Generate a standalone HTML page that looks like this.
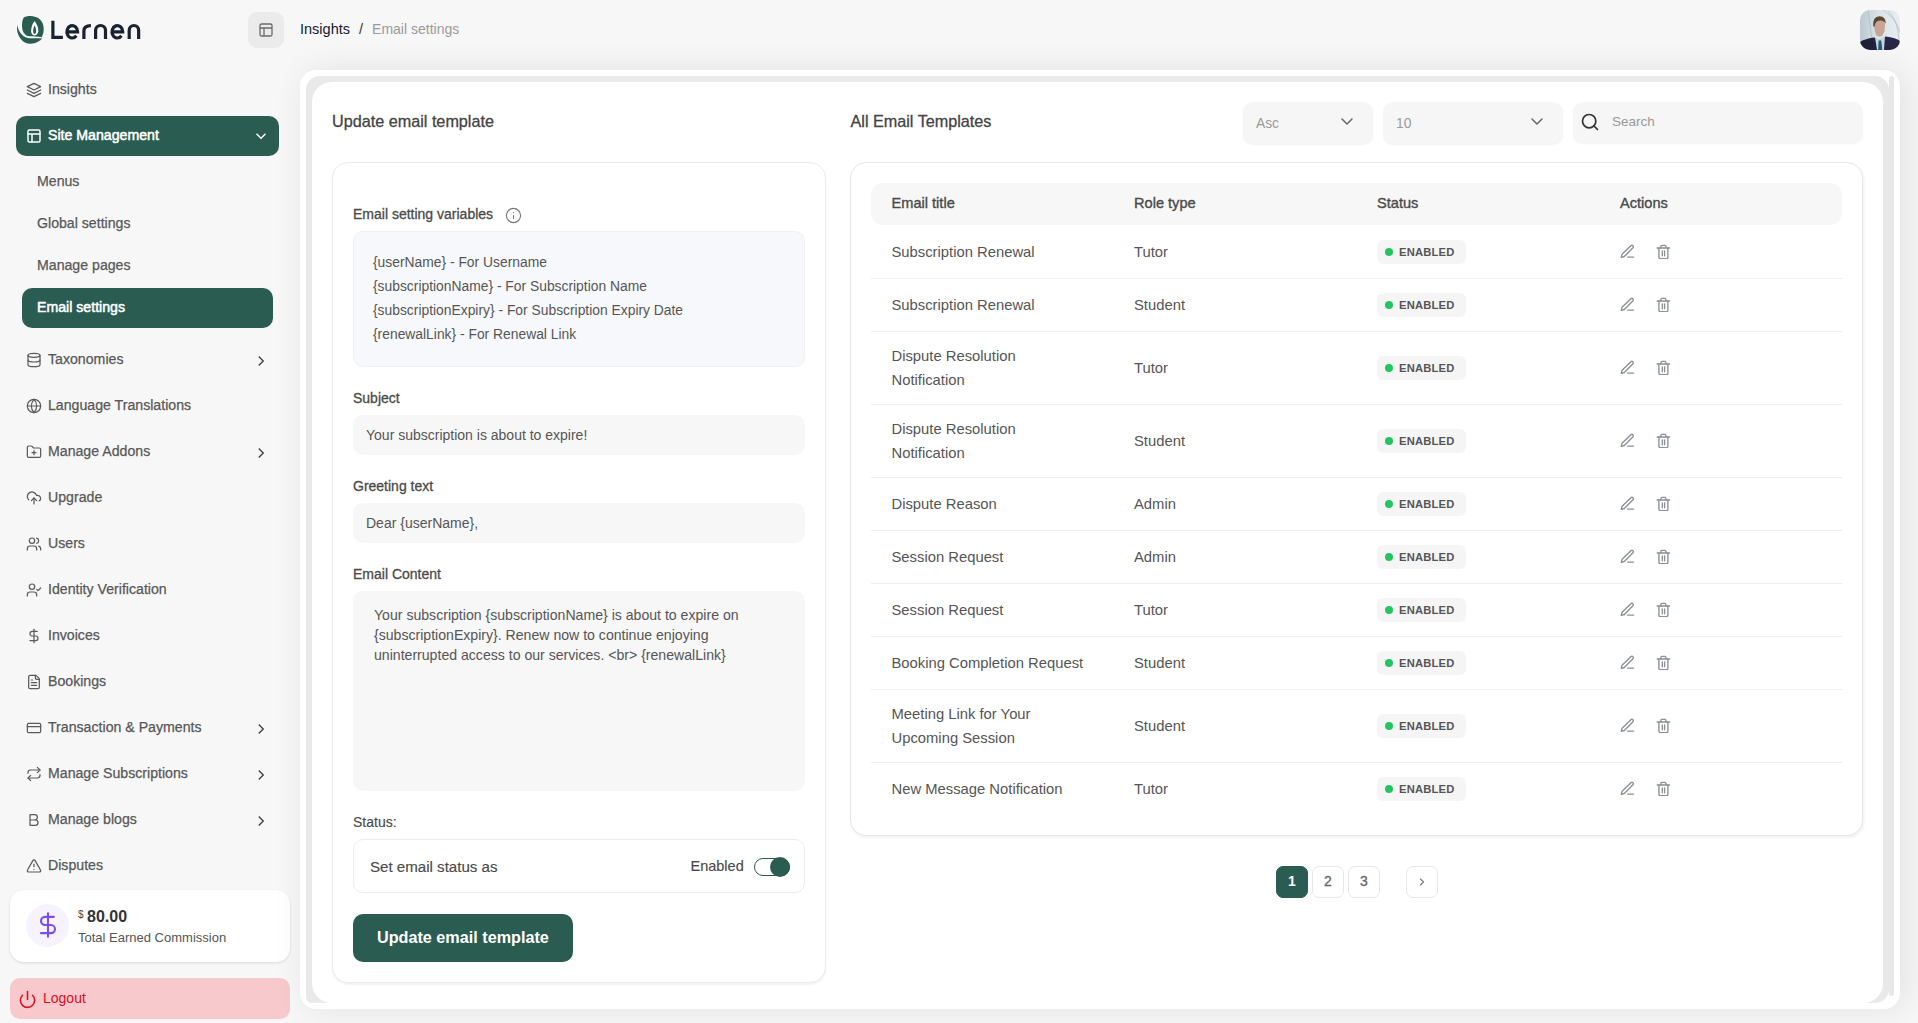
<!DOCTYPE html>
<html><head><meta charset="utf-8">
<style>
*{box-sizing:border-box;margin:0;padding:0}
html,body{width:1918px;height:1023px;overflow:hidden}
body{background:#f7f7f7;font-family:"Liberation Sans",sans-serif;color:#585858;position:relative}
.abs{position:absolute}
svg{display:block}
.nav{position:absolute;left:26px;height:24px;display:flex;align-items:center;font-size:14.15px;color:#585858;-webkit-text-stroke:0.25px #585858;white-space:nowrap}
.nav svg{width:16px;height:16px;margin-right:6px;position:relative;top:1px;stroke:#5a5a5a;fill:none;stroke-width:1.85;stroke-linecap:round;stroke-linejoin:round}
.chev{position:absolute;left:251.5px;width:18px;height:18px;stroke:#444;fill:none;stroke-width:1.9;stroke-linecap:butt;stroke-linejoin:miter}
.sub{position:absolute;left:37px;font-size:14.15px;color:#585858;-webkit-text-stroke:0.25px #585858;height:20px;line-height:20px;white-space:nowrap}
</style></head>
<body>
<!-- HEADER -->
<svg class="abs" style="left:0;top:0" width="150" height="60" viewBox="0 0 150 60">
<path d="M24 17.5 C27 15.5 36 15 40.5 20 C44.5 24.5 44.8 32 41.6 37.3 C37.5 36.4 33 36.6 29.5 36.3 C24.2 35.8 22 31 22 25.5 C22 21.5 22.8 18.5 24 17.5 Z" fill="#2a5c51"/>
<path d="M17.1 24.4 C15.8 35.5 22.5 44 31 43.8 C35.5 43.7 39.8 41.2 42.2 38.6 C38 38 34 38.2 30.5 38.3 C23.5 38.4 18.2 32 17.1 24.4 Z" fill="#2a5c51"/>
<path d="M34.5 21 C37 24 38.6 28 38.3 31.5 C37.9 34 36 35.5 34.6 35.5 C33 35.5 31.3 34 31.1 31.5 C31 28 32.2 24 34.5 21 Z" fill="#fbfbfb"/>
<path d="M34.6 25.5 C35.8 27.5 36.3 30 36.1 31.8 C35.9 33.2 35.2 33.9 34.6 33.9 C34 33.9 33.3 33.2 33.2 31.8 C33 30 33.5 27.5 34.6 25.5 Z" fill="#2a5c51"/>
<g fill="none" stroke="#1a2232" stroke-width="3.2" stroke-linecap="butt" stroke-linejoin="miter">
<path d="M52.9 20.8 V37.4 H62.9"/>
<path d="M66.9 31.8 H77.6 A5.35 6.2 0 1 0 76.35 35.8"/>
<path d="M83.9 38.9 V31 C83.9 27 86.5 25.7 90.9 25.7"/>
<path d="M95.6 38.9 V30.5 A4.95 5 0 0 1 105.5 30.5 V38.9"/>
<path d="M112 31.8 H122.7 A5.35 6.2 0 1 0 121.45 35.8"/>
<path d="M129.2 38.9 V30.5 A4.725 5 0 0 1 138.65 30.5 V38.9"/>
</g>
</svg>
<div class="abs" style="left:248px;top:12px;width:36px;height:36px;border-radius:9px;background:#ebebeb">
<svg class="abs" style="left:11px;top:11px" width="14" height="14" viewBox="0 0 14 14" fill="none" stroke="#6b6b6b" stroke-width="1.3"><rect x="1" y="1" width="12" height="12" rx="1.5"/><path d="M1 5h12M5 5v8"/></svg>
</div>
<div class="abs" style="left:300px;top:19px;font-size:14.5px;line-height:20px;color:#151a2d;white-space:nowrap">Insights <span style="color:#333;margin:0 5px">/</span> <span style="color:#9a9a9a;font-size:14px">Email settings</span></div>

<svg class="abs" style="left:1860px;top:10px" width="40" height="40" viewBox="0 0 40 40">
<defs><clipPath id="av"><rect width="40" height="40" rx="10"/></clipPath>
<linearGradient id="avbg" x1="0" y1="0" x2="1" y2="0"><stop offset="0" stop-color="#b9c9cf"/><stop offset="0.45" stop-color="#d9e4e8"/><stop offset="1" stop-color="#e6eef0"/></linearGradient>
<linearGradient id="suit" x1="0" y1="0" x2="1" y2="0"><stop offset="0" stop-color="#1d1d33"/><stop offset="0.7" stop-color="#27284a"/><stop offset="1" stop-color="#2a2440"/></linearGradient></defs>
<g clip-path="url(#av)">
<rect width="40" height="40" fill="url(#avbg)"/>
<path d="M23 0 Q36 8 40 22 M28 1 Q38 10 39 30 M8 0 L12 30" stroke="#aab8bf" stroke-width="0.9" fill="none" opacity="0.7"/>
<path d="M0 32 Q4 29 14 27.5 L19.5 30 L25.5 26.5 Q36 27.5 40 31 L40 40 L0 40 Z" fill="url(#suit)"/>
<path d="M15 27.5 L19.5 29.5 L25 26.5 L24 40 L17 40 Z" fill="#c3d6e2"/>
<path d="M18.6 30.5 L21.3 30.5 L22.3 40 L18.2 40 Z" fill="#2c5877"/>
<path d="M14 15 Q14 9 19.5 9 Q25 9 25 15 L24.5 21 Q23 26.5 19.5 26.5 Q16 26.5 14.8 21 Z" fill="#c8a495"/>
<path d="M13.2 16 Q12.5 6.5 19.5 6.2 Q26 6.3 25.6 14 Q24.5 10.2 20 10.5 Q15 10.5 14.5 17 Z" fill="#5e4536"/>
</g></svg>
<!-- SIDEBAR -->
<div class="nav" style="top:77px">
<svg viewBox="0 0 24 24"><path d="M12 2 2 7l10 5 10-5-10-5z"/><path d="m2 17 10 5 10-5"/><path d="m2 12 10 5 10-5"/></svg>Insights</div>

<div class="abs" style="left:16px;top:116px;width:263px;height:40px;border-radius:10px;background:#2a5c51"></div>
<div class="nav" style="top:123px;color:#fff;-webkit-text-stroke:0.5px #fff">
<svg viewBox="0 0 24 24" style="stroke:#fff;stroke-width:2.2"><rect x="3" y="3" width="18" height="18" rx="2"/><path d="M3 9h18M9 21V9"/></svg>Site Management</div>
<svg class="chev" style="top:127.0px;stroke:#fff" viewBox="0 0 24 24"><path d="m6 9 6 6 6-6"/></svg>

<div class="sub" style="top:171px">Menus</div>
<div class="sub" style="top:213px">Global settings</div>
<div class="sub" style="top:255px">Manage pages</div>
<div class="abs" style="left:22px;top:288px;width:251px;height:40px;border-radius:10px;background:#2a5c51"></div>
<div class="sub" style="top:297px;color:#fff;-webkit-text-stroke:0.5px #fff">Email settings</div>

<div class="nav" style="top:347px"><svg viewBox="0 0 24 24"><ellipse cx="12" cy="5" rx="9" ry="3"/><path d="M3 5v14a9 3 0 0 0 18 0V5"/><path d="M3 12a9 3 0 0 0 18 0"/></svg>Taxonomies</div>
<svg class="chev" style="top:351.5px" viewBox="0 0 24 24"><path d="m9 18 6-6-6-6"/></svg>
<div class="nav" style="top:393px"><svg viewBox="0 0 24 24"><circle cx="12" cy="12" r="10"/><path d="M12 2a14.5 14.5 0 0 0 0 20 14.5 14.5 0 0 0 0-20"/><path d="M2 12h20"/></svg>Language Translations</div>
<div class="nav" style="top:439px"><svg viewBox="0 0 24 24"><path d="M12 10v6M9 13h6"/><path d="M20 20a2 2 0 0 0 2-2V8a2 2 0 0 0-2-2h-7.9a2 2 0 0 1-1.69-.9L9.6 3.9A2 2 0 0 0 7.93 3H4a2 2 0 0 0-2 2v13a2 2 0 0 0 2 2Z"/></svg>Manage Addons</div>
<svg class="chev" style="top:443.5px" viewBox="0 0 24 24"><path d="m9 18 6-6-6-6"/></svg>
<div class="nav" style="top:485px"><svg viewBox="0 0 24 24"><path d="M4 14.9A7 7 0 1 1 15.7 8h1.8a4.5 4.5 0 0 1 2.5 8.2"/><path d="M12 12v9"/><path d="m16 16-4-4-4 4"/></svg>Upgrade</div>
<div class="nav" style="top:531px"><svg viewBox="0 0 24 24"><path d="M16 21v-2a4 4 0 0 0-4-4H6a4 4 0 0 0-4 4v2"/><circle cx="9" cy="7" r="4"/><path d="M22 21v-2a4 4 0 0 0-3-3.87M16 3.13a4 4 0 0 1 0 7.75"/></svg>Users</div>
<div class="nav" style="top:577px"><svg viewBox="0 0 24 24"><path d="M16 21v-2a4 4 0 0 0-4-4H6a4 4 0 0 0-4 4v2"/><circle cx="9" cy="7" r="4"/><path d="M16 11l2 2 4-4"/></svg>Identity Verification</div>
<div class="nav" style="top:623px"><svg viewBox="0 0 24 24"><path d="M12 2v20"/><path d="M17 5H9.5a3.5 3.5 0 0 0 0 7h5a3.5 3.5 0 0 1 0 7H6"/></svg>Invoices</div>
<div class="nav" style="top:669px"><svg viewBox="0 0 24 24"><path d="M15 2H6a2 2 0 0 0-2 2v16a2 2 0 0 0 2 2h12a2 2 0 0 0 2-2V7Z"/><path d="M14 2v4a2 2 0 0 0 2 2h4M10 9H8M16 13H8M16 17H8"/></svg>Bookings</div>
<div class="nav" style="top:715px"><svg viewBox="0 0 24 24"><rect x="2" y="5" width="20" height="14" rx="2"/><path d="M2 10h20"/></svg>Transaction &amp; Payments</div>
<svg class="chev" style="top:719.5px" viewBox="0 0 24 24"><path d="m9 18 6-6-6-6"/></svg>
<div class="nav" style="top:761px"><svg viewBox="0 0 24 24"><path d="m17 2 4 4-4 4"/><path d="M3 11v-1a4 4 0 0 1 4-4h14"/><path d="m7 22-4-4 4-4"/><path d="M21 13v1a4 4 0 0 1-4 4H3"/></svg>Manage Subscriptions</div>
<svg class="chev" style="top:765.5px" viewBox="0 0 24 24"><path d="m9 18 6-6-6-6"/></svg>
<div class="nav" style="top:807px"><svg viewBox="0 0 24 24"><path d="M6 4h7a4 4 0 0 1 0 8H6zM6 12h8a4 4 0 0 1 0 8H6z"/></svg>Manage blogs</div>
<svg class="chev" style="top:811.5px" viewBox="0 0 24 24"><path d="m9 18 6-6-6-6"/></svg>
<div class="nav" style="top:853px"><svg viewBox="0 0 24 24"><path d="m21.73 18-8-14a2 2 0 0 0-3.48 0l-8 14A2 2 0 0 0 4 21h16a2 2 0 0 0 1.73-3"/><path d="M12 9v4M12 17h.01"/></svg>Disputes</div>

<div class="abs" style="left:10px;top:890px;width:280px;height:72px;border-radius:14px;background:#fff;box-shadow:0 1px 3px rgba(0,0,0,0.12)">
<div class="abs" style="left:16px;top:14px;width:43px;height:43px;border-radius:50%;background:#f6f3ff">
<svg class="abs" style="left:8px;top:7px" width="28" height="28" viewBox="0 0 24 24" fill="none" stroke="#7c4df0" stroke-width="1.8" stroke-linecap="round"><path d="M12 2v20"/><path d="M17 5H9.5a3.5 3.5 0 0 0 0 7h5a3.5 3.5 0 0 1 0 7H6"/></svg>
</div>
<div class="abs" style="left:68px;top:19px;font-size:10px;line-height:12px;color:#444">$</div>
<div class="abs" style="left:77px;top:17.5px;font-size:16px;font-weight:bold;color:#333;line-height:18px">80.00</div>
<div class="abs" style="left:68px;top:40px;font-size:13px;color:#555;line-height:16px">Total Earned Commission</div>
</div>

<div class="abs" style="left:10px;top:978px;width:280px;height:41px;border-radius:10px;background:#f8c9cc">
<svg class="abs" style="left:7.5px;top:11.5px" width="19" height="19" viewBox="0 0 24 24" fill="none" stroke="#e00b1c" stroke-width="2" stroke-linecap="round"><path d="M12 2v10"/><path d="M18.4 6.6a9 9 0 1 1-12.77.04"/></svg>
<div class="abs" style="left:33px;top:11px;font-size:14px;color:#e00b1c;line-height:18px">Logout</div>
</div>

<!-- MAIN CONTAINER -->
<div class="abs" style="left:300px;top:70px;width:1600px;height:939px;border-radius:16px;background:#fff;box-shadow:6px 0 34px rgba(0,0,0,0.09)"></div>
<div class="abs" style="left:306px;top:76px;width:1583px;height:927px;border-radius:14px 14px 14px 6px;background:#e9e9e9"></div>
<div class="abs" style="left:1889px;top:76px;width:5px;height:920px;border-radius:3px;background:#e7e7e7"></div>
<div class="abs" style="left:312px;top:82px;width:1571px;height:921px;border-radius:20px;background:#fff"></div>

<!--CONTENT--><style>
.t{position:absolute;white-space:nowrap;line-height:20px}
.lbl{font-size:14px;color:#4a4a4a;-webkit-text-stroke:0.3px #4a4a4a}
.inp{position:absolute;left:353px;width:452px;background:#f7f7f7;border-radius:10px}
.th{font-size:14.6px;color:#4a4a4a;-webkit-text-stroke:0.35px #4a4a4a}
.td{font-size:14.8px;color:#555;line-height:24px}
.sep{position:absolute;left:871px;width:971px;height:1px;background:#eeeeee}
.badge{position:absolute;left:1377px;width:89px;height:24px;border-radius:6px;background:#f5f5f5}
.badge i{position:absolute;left:8px;top:8px;width:8px;height:8px;border-radius:50%;background:#22c55e}
.badge b{position:absolute;left:22px;top:3px;font-size:11.2px;line-height:18px;color:#555;letter-spacing:0.2px}
.ic{position:absolute;width:16px;height:16px;fill:none;stroke:#8b9096;stroke-width:1.35;stroke-linecap:round;stroke-linejoin:round}
.pg{position:absolute;top:866px;width:32px;height:32px;border-radius:7px;border:1px solid #e6e6e6;background:#fff;font-size:14px;color:#666;text-align:center;line-height:28px;-webkit-text-stroke:0.3px #666}
</style>
<!-- FORM -->
<div class="t" style="left:332px;top:111.4px;font-size:16.2px;color:#444;-webkit-text-stroke:0.3px #444">Update email template</div>
<div class="abs" style="left:332px;top:162px;width:493.5px;height:821px;border-radius:16px;border:1px solid #ebebeb;background:#fff;box-shadow:0 2px 2px rgba(0,0,0,0.05)"></div>
<div class="t lbl" style="left:353px;top:204px">Email setting variables</div>
<svg class="abs" style="left:505px;top:206.5px" width="17" height="17" viewBox="0 0 24 24" fill="none" stroke="#777" stroke-width="1.6" stroke-linecap="round"><circle cx="12" cy="12" r="10"/><path d="M12 16v-4M12 8h.01"/></svg>
<div class="abs" style="left:353px;top:231px;width:452px;height:136px;border-radius:10px;background:#f7f8fb;border:1px solid #eef0f4"></div>
<div class="t" style="left:373px;top:250.2px;font-size:13.85px;line-height:24px;color:#555">{userName} - For Username<br>{subscriptionName} - For Subscription Name<br>{subscriptionExpiry} - For Subscription Expiry Date<br>{renewalLink} - For Renewal Link</div>

<div class="t lbl" style="left:353px;top:388.2px">Subject</div>
<div class="inp" style="top:415px;height:40px"></div>
<div class="t" style="left:366px;top:425.2px;font-size:14px;color:#555">Your subscription is about to expire!</div>
<div class="t lbl" style="left:353px;top:476.2px">Greeting text</div>
<div class="inp" style="top:503px;height:40px"></div>
<div class="t" style="left:366px;top:513.2px;font-size:14px;color:#555">Dear {userName},</div>
<div class="t lbl" style="left:353px;top:564.2px">Email Content</div>
<div class="inp" style="top:591px;height:200px"></div>
<div class="t" style="left:374px;top:604.8px;font-size:14.1px;color:#555">Your subscription {subscriptionName} is about to expire on<br>{subscriptionExpiry}. Renew now to continue enjoying<br>uninterrupted access to our services. &lt;br&gt; {renewalLink}</div>

<div class="t" style="left:353px;top:812.2px;font-size:14px;color:#4a4a4a;-webkit-text-stroke:0.15px #4a4a4a">Status:</div>
<div class="abs" style="left:353px;top:839px;width:452px;height:54px;border-radius:10px;border:1px solid #ececec;background:#fff"></div>
<div class="t" style="left:370px;top:856.8px;font-size:15.1px;color:#4a4a4a;-webkit-text-stroke:0.15px #4a4a4a">Set email status as</div>
<div class="t" style="left:690.5px;top:856px;font-size:14.5px;color:#4a4a4a;-webkit-text-stroke:0.15px #4a4a4a">Enabled</div>
<div class="abs" style="left:754px;top:858px;width:36px;height:18px;border-radius:9px;border:1.5px solid #2a5c51;background:#fff"></div>
<div class="abs" style="left:770px;top:857px;width:20px;height:20px;border-radius:50%;background:#2a5c51"></div>
<div class="abs" style="left:353px;top:914px;width:220px;height:48px;border-radius:10px;background:#2a5c51"></div>
<div class="t" style="left:377px;top:927px;font-size:16.2px;font-weight:bold;color:#fff">Update email template</div>

<!-- TABLE -->
<div class="t" style="left:850.5px;top:111.4px;font-size:16.2px;color:#444;-webkit-text-stroke:0.3px #444">All Email Templates</div>
<div class="abs" style="left:1243px;top:102px;width:130px;height:42px;border-radius:10px;background:#f6f6f6;box-shadow:0 1px 2px rgba(0,0,0,0.06)"></div>
<div class="t" style="left:1256px;top:114px;font-size:13.8px;color:#9a9a9a">Asc</div>
<svg class="abs" style="left:1339px;top:116px" width="16" height="12" viewBox="0 0 16 12" fill="none" stroke="#666" stroke-width="1.5" stroke-linecap="round" stroke-linejoin="round"><path d="M3 3l5 5 5-5"/></svg>
<div class="abs" style="left:1383px;top:102px;width:180px;height:42px;border-radius:10px;background:#f6f6f6;box-shadow:0 1px 2px rgba(0,0,0,0.06)"></div>
<div class="t" style="left:1396px;top:114px;font-size:13.8px;color:#9a9a9a">10</div>
<svg class="abs" style="left:1529px;top:116px" width="16" height="12" viewBox="0 0 16 12" fill="none" stroke="#666" stroke-width="1.5" stroke-linecap="round" stroke-linejoin="round"><path d="M3 3l5 5 5-5"/></svg>
<div class="abs" style="left:1573px;top:102px;width:290px;height:41px;border-radius:10px;background:#f6f6f6;box-shadow:0 1px 2px rgba(0,0,0,0.05)"></div>
<svg class="abs" style="left:1580px;top:112px" width="20" height="20" viewBox="0 0 24 24" fill="none" stroke="#333" stroke-width="2" stroke-linecap="round"><circle cx="11" cy="11" r="8"/><path d="m21 21-4.3-4.3"/></svg>
<div class="t" style="left:1612px;top:112.3px;font-size:13.5px;color:#999">Search</div>

<div class="abs" style="left:850px;top:162px;width:1013px;height:674px;border-radius:16px;border:1px solid #e6e6e6;background:#fff;box-shadow:1px 2px 3px rgba(0,0,0,0.06)"></div>
<div class="abs" style="left:871px;top:183px;width:971px;height:42px;border-radius:12px;background:#f7f7f7"></div>
<div class="t th" style="left:891.5px;top:193.2px">Email title</div>
<div class="t th" style="left:1134px;top:193.2px">Role type</div>
<div class="t th" style="left:1377px;top:193.2px">Status</div>
<div class="t th" style="left:1620px;top:193.2px">Actions</div>
<div class="t td" style="left:891.5px;top:240.37px">Subscription Renewal</div>
<div class="t td" style="left:1134px;top:240.37px">Tutor</div>
<div class="badge" style="top:239.5px"><i></i><b>ENABLED</b></div>
<svg class="ic" style="left:1619px;top:243.0px" viewBox="0 0 16 16"><path d="M11.9 2.7a1.45 1.45 0 0 1 2.05 2.05L5.3 13.5 2.2 14.4 3.1 11.3Z"/><path d="M8.6 14.1H14.6"/></svg>
<svg class="ic" style="left:1655px;top:243.0px" viewBox="0 0 16 16"><path d="M2.2 5h12.4"/><path d="M5.9 5V3.2c0-.5.4-.9.9-.9h3.2c.5 0 .9.4.9.9V5"/><path d="M3.9 5v9.2c0 .8.6 1.4 1.4 1.4h6.2c.8 0 1.4-.6 1.4-1.4V5"/><path d="M7.3 7.8v4.9M9.6 7.8v4.9"/></svg>
<div class="t td" style="left:891.5px;top:293.37px">Subscription Renewal</div>
<div class="t td" style="left:1134px;top:293.37px">Student</div>
<div class="badge" style="top:292.5px"><i></i><b>ENABLED</b></div>
<svg class="ic" style="left:1619px;top:296.0px" viewBox="0 0 16 16"><path d="M11.9 2.7a1.45 1.45 0 0 1 2.05 2.05L5.3 13.5 2.2 14.4 3.1 11.3Z"/><path d="M8.6 14.1H14.6"/></svg>
<svg class="ic" style="left:1655px;top:296.0px" viewBox="0 0 16 16"><path d="M2.2 5h12.4"/><path d="M5.9 5V3.2c0-.5.4-.9.9-.9h3.2c.5 0 .9.4.9.9V5"/><path d="M3.9 5v9.2c0 .8.6 1.4 1.4 1.4h6.2c.8 0 1.4-.6 1.4-1.4V5"/><path d="M7.3 7.8v4.9M9.6 7.8v4.9"/></svg>
<div class="sep" style="top:278px"></div>
<div class="t td" style="left:891.5px;top:344.37px">Dispute Resolution<br>Notification</div>
<div class="t td" style="left:1134px;top:356.37px">Tutor</div>
<div class="badge" style="top:355.5px"><i></i><b>ENABLED</b></div>
<svg class="ic" style="left:1619px;top:359.0px" viewBox="0 0 16 16"><path d="M11.9 2.7a1.45 1.45 0 0 1 2.05 2.05L5.3 13.5 2.2 14.4 3.1 11.3Z"/><path d="M8.6 14.1H14.6"/></svg>
<svg class="ic" style="left:1655px;top:359.0px" viewBox="0 0 16 16"><path d="M2.2 5h12.4"/><path d="M5.9 5V3.2c0-.5.4-.9.9-.9h3.2c.5 0 .9.4.9.9V5"/><path d="M3.9 5v9.2c0 .8.6 1.4 1.4 1.4h6.2c.8 0 1.4-.6 1.4-1.4V5"/><path d="M7.3 7.8v4.9M9.6 7.8v4.9"/></svg>
<div class="sep" style="top:331px"></div>
<div class="t td" style="left:891.5px;top:417.37px">Dispute Resolution<br>Notification</div>
<div class="t td" style="left:1134px;top:429.37px">Student</div>
<div class="badge" style="top:428.5px"><i></i><b>ENABLED</b></div>
<svg class="ic" style="left:1619px;top:432.0px" viewBox="0 0 16 16"><path d="M11.9 2.7a1.45 1.45 0 0 1 2.05 2.05L5.3 13.5 2.2 14.4 3.1 11.3Z"/><path d="M8.6 14.1H14.6"/></svg>
<svg class="ic" style="left:1655px;top:432.0px" viewBox="0 0 16 16"><path d="M2.2 5h12.4"/><path d="M5.9 5V3.2c0-.5.4-.9.9-.9h3.2c.5 0 .9.4.9.9V5"/><path d="M3.9 5v9.2c0 .8.6 1.4 1.4 1.4h6.2c.8 0 1.4-.6 1.4-1.4V5"/><path d="M7.3 7.8v4.9M9.6 7.8v4.9"/></svg>
<div class="sep" style="top:404px"></div>
<div class="t td" style="left:891.5px;top:492.37px">Dispute Reason</div>
<div class="t td" style="left:1134px;top:492.37px">Admin</div>
<div class="badge" style="top:491.5px"><i></i><b>ENABLED</b></div>
<svg class="ic" style="left:1619px;top:495.0px" viewBox="0 0 16 16"><path d="M11.9 2.7a1.45 1.45 0 0 1 2.05 2.05L5.3 13.5 2.2 14.4 3.1 11.3Z"/><path d="M8.6 14.1H14.6"/></svg>
<svg class="ic" style="left:1655px;top:495.0px" viewBox="0 0 16 16"><path d="M2.2 5h12.4"/><path d="M5.9 5V3.2c0-.5.4-.9.9-.9h3.2c.5 0 .9.4.9.9V5"/><path d="M3.9 5v9.2c0 .8.6 1.4 1.4 1.4h6.2c.8 0 1.4-.6 1.4-1.4V5"/><path d="M7.3 7.8v4.9M9.6 7.8v4.9"/></svg>
<div class="sep" style="top:477px"></div>
<div class="t td" style="left:891.5px;top:545.37px">Session Request</div>
<div class="t td" style="left:1134px;top:545.37px">Admin</div>
<div class="badge" style="top:544.5px"><i></i><b>ENABLED</b></div>
<svg class="ic" style="left:1619px;top:548.0px" viewBox="0 0 16 16"><path d="M11.9 2.7a1.45 1.45 0 0 1 2.05 2.05L5.3 13.5 2.2 14.4 3.1 11.3Z"/><path d="M8.6 14.1H14.6"/></svg>
<svg class="ic" style="left:1655px;top:548.0px" viewBox="0 0 16 16"><path d="M2.2 5h12.4"/><path d="M5.9 5V3.2c0-.5.4-.9.9-.9h3.2c.5 0 .9.4.9.9V5"/><path d="M3.9 5v9.2c0 .8.6 1.4 1.4 1.4h6.2c.8 0 1.4-.6 1.4-1.4V5"/><path d="M7.3 7.8v4.9M9.6 7.8v4.9"/></svg>
<div class="sep" style="top:530px"></div>
<div class="t td" style="left:891.5px;top:598.37px">Session Request</div>
<div class="t td" style="left:1134px;top:598.37px">Tutor</div>
<div class="badge" style="top:597.5px"><i></i><b>ENABLED</b></div>
<svg class="ic" style="left:1619px;top:601.0px" viewBox="0 0 16 16"><path d="M11.9 2.7a1.45 1.45 0 0 1 2.05 2.05L5.3 13.5 2.2 14.4 3.1 11.3Z"/><path d="M8.6 14.1H14.6"/></svg>
<svg class="ic" style="left:1655px;top:601.0px" viewBox="0 0 16 16"><path d="M2.2 5h12.4"/><path d="M5.9 5V3.2c0-.5.4-.9.9-.9h3.2c.5 0 .9.4.9.9V5"/><path d="M3.9 5v9.2c0 .8.6 1.4 1.4 1.4h6.2c.8 0 1.4-.6 1.4-1.4V5"/><path d="M7.3 7.8v4.9M9.6 7.8v4.9"/></svg>
<div class="sep" style="top:583px"></div>
<div class="t td" style="left:891.5px;top:651.37px">Booking Completion Request</div>
<div class="t td" style="left:1134px;top:651.37px">Student</div>
<div class="badge" style="top:650.5px"><i></i><b>ENABLED</b></div>
<svg class="ic" style="left:1619px;top:654.0px" viewBox="0 0 16 16"><path d="M11.9 2.7a1.45 1.45 0 0 1 2.05 2.05L5.3 13.5 2.2 14.4 3.1 11.3Z"/><path d="M8.6 14.1H14.6"/></svg>
<svg class="ic" style="left:1655px;top:654.0px" viewBox="0 0 16 16"><path d="M2.2 5h12.4"/><path d="M5.9 5V3.2c0-.5.4-.9.9-.9h3.2c.5 0 .9.4.9.9V5"/><path d="M3.9 5v9.2c0 .8.6 1.4 1.4 1.4h6.2c.8 0 1.4-.6 1.4-1.4V5"/><path d="M7.3 7.8v4.9M9.6 7.8v4.9"/></svg>
<div class="sep" style="top:636px"></div>
<div class="t td" style="left:891.5px;top:702.37px">Meeting Link for Your<br>Upcoming Session</div>
<div class="t td" style="left:1134px;top:714.37px">Student</div>
<div class="badge" style="top:713.5px"><i></i><b>ENABLED</b></div>
<svg class="ic" style="left:1619px;top:717.0px" viewBox="0 0 16 16"><path d="M11.9 2.7a1.45 1.45 0 0 1 2.05 2.05L5.3 13.5 2.2 14.4 3.1 11.3Z"/><path d="M8.6 14.1H14.6"/></svg>
<svg class="ic" style="left:1655px;top:717.0px" viewBox="0 0 16 16"><path d="M2.2 5h12.4"/><path d="M5.9 5V3.2c0-.5.4-.9.9-.9h3.2c.5 0 .9.4.9.9V5"/><path d="M3.9 5v9.2c0 .8.6 1.4 1.4 1.4h6.2c.8 0 1.4-.6 1.4-1.4V5"/><path d="M7.3 7.8v4.9M9.6 7.8v4.9"/></svg>
<div class="sep" style="top:689px"></div>
<div class="t td" style="left:891.5px;top:777.37px">New Message Notification</div>
<div class="t td" style="left:1134px;top:777.37px">Tutor</div>
<div class="badge" style="top:776.5px"><i></i><b>ENABLED</b></div>
<svg class="ic" style="left:1619px;top:780.0px" viewBox="0 0 16 16"><path d="M11.9 2.7a1.45 1.45 0 0 1 2.05 2.05L5.3 13.5 2.2 14.4 3.1 11.3Z"/><path d="M8.6 14.1H14.6"/></svg>
<svg class="ic" style="left:1655px;top:780.0px" viewBox="0 0 16 16"><path d="M2.2 5h12.4"/><path d="M5.9 5V3.2c0-.5.4-.9.9-.9h3.2c.5 0 .9.4.9.9V5"/><path d="M3.9 5v9.2c0 .8.6 1.4 1.4 1.4h6.2c.8 0 1.4-.6 1.4-1.4V5"/><path d="M7.3 7.8v4.9M9.6 7.8v4.9"/></svg>
<div class="sep" style="top:762px"></div>
<div class="pg" style="left:1276px;background:#2a5c51;border-color:#2a5c51;color:#fff;font-weight:bold;-webkit-text-stroke:0">1</div>
<div class="pg" style="left:1312px">2</div>
<div class="pg" style="left:1348px">3</div>
<div class="pg" style="left:1406px"><svg style="position:absolute;left:9px;top:8.5px" width="12" height="12" viewBox="0 0 24 24" fill="none" stroke="#777" stroke-width="2.3" stroke-linecap="round" stroke-linejoin="round"><path d="m9 18 6-6-6-6"/></svg></div>
<!--/CONTENT-->
</body></html>
